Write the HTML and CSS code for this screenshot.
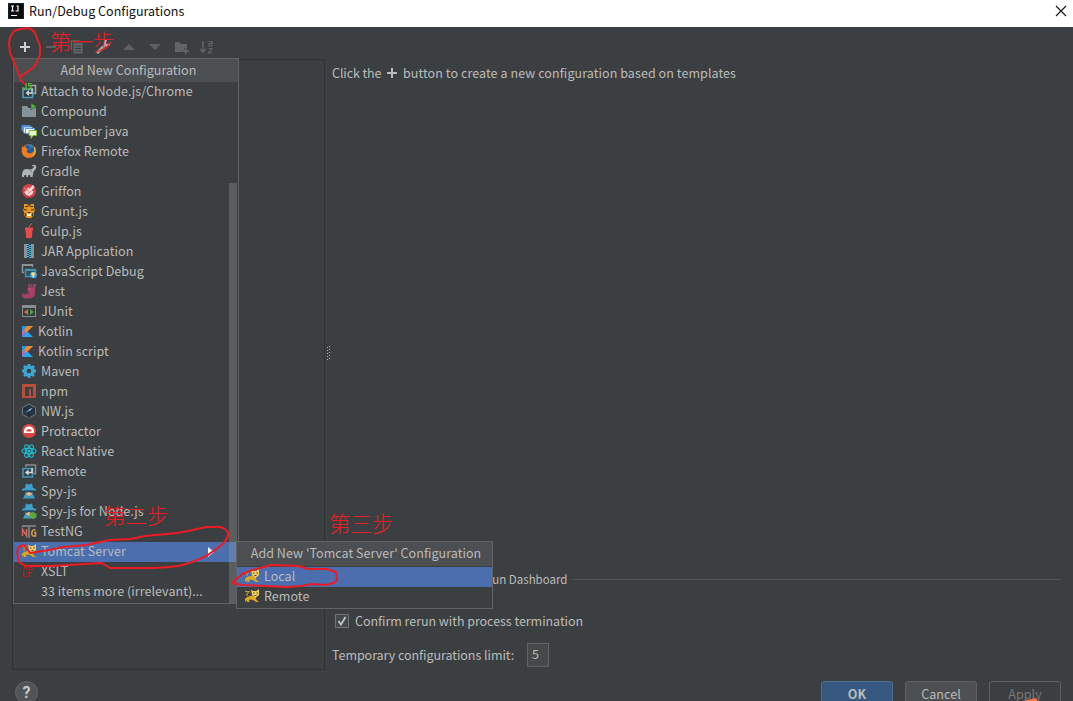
FILE: index.html
```html
<!DOCTYPE html>
<html lang="en">
<head>
<meta charset="utf-8">
<title>Run/Debug Configurations</title>
<link rel="stylesheet" href="styles.css">
</head>
<body>
<svg class="defs" width="0" height="0">
  <symbol id="attach" viewBox="0 0 16 16"><path d="M10 2.500h4.500v8H12" fill="none" stroke="#9aa7b0" stroke-width="1.600"/><path d="M2 6.500h9.500V14.500H2z" fill="#30393d" stroke="#4f9dbd" stroke-width="1.600"/><path d="M11 5v5H6" fill="none" stroke="#d0d4d6" stroke-width="1.400"/><path d="M8 7 4.500 10 8 13z" fill="#d0d4d6"/><path d="M5 0v5.500H2V4M10.500 .7H7.500v2h2.500v2.800H7" fill="none" stroke="#62b543" stroke-width="1.300"/></symbol>
  <symbol id="compound" viewBox="0 0 16 16"><path d="M1 3h5l1.500 2H15v9H1z" fill="#87939a"/><path d="M10 0v7l5.500-3.500z" fill="#4fb53b" stroke="#3c3f41" stroke-width=".5"/></symbol>
  <symbol id="cucumber" viewBox="0 0 16 16"><rect x=".5" y="2" width="9" height="6" rx="1" fill="#4a8fdc"/><rect x="2.500" y="4" width="9" height="6" rx="1" fill="#f5f8ff" stroke="#5d9be2"/><rect x="4.500" y="5.500" width="9" height="5" fill="#fff" stroke="#5d9be2"/><path d="M8 7.500h7.500v5H12l-2 3v-3H8z" fill="#eaf6cf" stroke="#79b83a"/></symbol>
  <symbol id="firefox" viewBox="0 0 16 16"><circle cx="8" cy="8" r="7" fill="#e86a1b"/><circle cx="8.500" cy="6.500" r="5.200" fill="#225a9d"/><path d="M6 1.500c3-1 6 0 7 3l-3 1z" fill="#3778b9"/><path d="M1.500 3 3 4.500l2-.5c0 1.500 1 2 2 2L5.500 8c1 3 5 3.500 7.500 0 1 5-3 7-6 6.500C1 14-.5 8 1.500 3z" fill="#ef7d1c"/><path d="M14 4c1.500 4 .5 8-3 10 2-3 3-5 2-9z" fill="#f6c62c"/></symbol>
  <symbol id="gradle" viewBox="0 0 16 16"><path d="M1 14c-.2-5 1-8 4.500-8 2 0 4 1 5.500 0l2-2c.5-.7-.5-1.300-1.300-.5l-.9-.6C12 1 15.300 1.300 15.300 4c0 3-3 3.500-3 6l-.8 4H9.500l-.5-2H7.500L7 14H5.500L5 12H3.500L3 14z" fill="#adb2b4"/><circle cx="10" cy="8" r=".6" fill="#3c3f41"/></symbol>
  <symbol id="griffon" viewBox="0 0 16 16"><circle cx="8" cy="8" r="7" fill="#d63d45"/><path d="M3 4.500 6 7l1-3.500L8 6l4-4 1.500 2-3 3.500 2 .5-1 3-3 2-3-1L3 9l2-1z" fill="#f6dedd"/><path d="m4 6 4 2M7 11l3-3" stroke="#d63d45" stroke-width=".7"/></symbol>
  <symbol id="grunt" viewBox="0 0 16 16"><path d="M3 1h2l3 1 3-1h2v4l1 2-1 2v3l-3 3H6l-3-3V9L2 7l1-2z" fill="#e99a1d"/><path d="M4 3.500h3M9 3.500h3M3 6.500l3 .5M13 6.500l-3 .5M4 10l1 3M12 10l-1 3M8 1.500v2" stroke="#4b2d17" stroke-width="1.200"/><path d="M6 10h4v3H6z" fill="#fff0bb"/><path d="M6 9h4l-2 2z" fill="#4b2d17"/></symbol>
  <symbol id="gulp" viewBox="0 0 16 16"><path d="M4 4.500h8v2l-.5 1-.7 7.500H5.200l-.7-7.500L4 6.500z" fill="#eb4a4b"/><path d="m8 5 1-3 2-1.500" fill="none" stroke="#eb4a4b"/></symbol>
  <symbol id="jar" viewBox="0 0 16 16"><path d="M3 1h10v14H3z" fill="#87939a"/><path d="M6 1h4v14H6z" fill="#25485a"/><path d="M7 1v14M9 2v13" stroke="#40b6e0" stroke-width="2" stroke-dasharray="1 1"/></symbol>
  <symbol id="jsdebug" viewBox="0 0 16 16"><path d="M3 9.500H1.500V2h10v2" fill="none" stroke="#87939a" stroke-width="1.500"/><path d="M1 1h11v2H1z" fill="#87939a"/><path d="M4.500 6.500h10v7h-10z" fill="#344e5a" stroke="#4593b3" stroke-width="1.500"/><path d="M4 6h11v2H4z" fill="#4593b3"/><circle cx="12.500" cy="12" r="3.300" fill="#4da5e5"/><path d="M10 10c3-2 5 0 4 2l-1 .5v2c-2 0-1-2-2.500-3z" fill="#f2df85"/></symbol>
  <symbol id="jest" viewBox="0 0 16 16"><path d="M7 1h8l-1 5v5c-1 4-5 4.500-9 4.500-4-.5-5-4-3-5s3 .5 4 .5l2-4z" fill="#a83f66"/><path d="m9 1 1 4M12 1l-1 4M3 10l1 2M7 10l2 2" stroke="#3c3f41" stroke-width=".8"/><circle cx="8" cy="6" r="1.500" fill="#bc4b75"/></symbol>
  <symbol id="junit" viewBox="0 0 16 16"><path d="M1 2h14v12H1z" fill="#8b8e90"/><path d="M2 5h12v8H2z" fill="#393d3f"/><path d="M7 6v6L3 9z" fill="#d66a52"/><path d="M9 6v6l4-3z" fill="#3ea34b"/></symbol>
  <symbol id="kotlin" viewBox="0 0 13 16"><path d="M1 3h11L1 14z" fill="#806cdd"/><path d="M6 3h6L1 14V9z" fill="#f28a22"/><path d="M1 3h5L1 8.500z" fill="#159fe5"/><path d="M1 9.500 4 6.500v4.500l-3 3z" fill="#9b72c5"/><path d="m1 14 5.500-5.500L12 14z" fill="#20a6f3"/></symbol>
  <symbol id="maven" viewBox="0 0 16 16"><circle cx="8" cy="8" r="4" fill="none" stroke="#3ca6d3" stroke-width="3.500"/><path d="M8 1v2.500M8 12.500V15M1 8h2.500M12.500 8H15M3 3l2 2M11 11l2 2M3 13l2-2M11 5l2-2" stroke="#3ca6d3" stroke-width="2.800"/></symbol>
  <symbol id="npm" viewBox="0 0 16 16"><path d="M1 1h14v14H1z" fill="#b84c3d"/><path d="M4 4h8v9h-2V6H8v7H4z" fill="#3c3f41"/></symbol>
  <symbol id="nw" viewBox="0 0 16 16"><path d="m8 1 6.500 3.500v7L8 15l-6.500-3.500v-7z" fill="#283442" stroke="#71808a" stroke-width=".9"/><path d="m2 5 6 3 6-3M8 8v7" fill="none" stroke="#1d2530"/><path d="m4 10 3-3 5-2.500-4 4z" fill="#3f80c6"/><path d="m8 7 4-2.500-3.500 3.500z" fill="#dce9ff"/></symbol>
  <symbol id="protractor" viewBox="0 0 16 16"><circle cx="8" cy="8" r="7" fill="#d74843"/><path d="M3 10V8a5 4.500 0 0 1 10 0v2z" fill="#fff"/><path d="M5.500 8.500a2.500 2.500 0 0 1 5 0z" fill="#d74843"/></symbol>
  <symbol id="react" viewBox="0 0 16 16"><g fill="none" stroke="#20bed3" stroke-width="1.100"><ellipse cx="8" cy="8" rx="7" ry="2.700"/><ellipse cx="8" cy="8" rx="7" ry="2.700" transform="rotate(60 8 8)"/><ellipse cx="8" cy="8" rx="7" ry="2.700" transform="rotate(120 8 8)"/></g><circle cx="8" cy="8" r="1.500" fill="#20bed3"/></symbol>
  <symbol id="remote" viewBox="0 0 16 16"><path d="M5 4V2h9.500v8.500H12" fill="none" stroke="#858d91" stroke-width="1.500"/><path d="M2 5.500h9.500V14H2z" fill="#32434c" stroke="#4593b3" stroke-width="1.600"/><path d="M11 5v4.500H6" fill="none" stroke="#d7dcdf" stroke-width="1.500"/><path d="M7.500 6.500 4 9.500l3.500 3z" fill="#d7dcdf"/></symbol>
  <symbol id="spy" viewBox="0 0 16 16"><path d="m5 .5 3 1 3-1 1 4.500 3 1v1.500H1V6l3-1z" fill="#3d9fca"/><path d="M4 8.500h8l-1 3-3 2-3-2z" fill="#ddb991"/><path d="M3.500 7.500h9v2.200H9.500L8 8.700 6.500 9.700h-3z" fill="#244f66"/><path d="m4 11 4 2.500 4-2.500 2 4.500H2z" fill="#3d9fca"/></symbol>
  <symbol id="spynode" viewBox="0 0 16 16"><use href="#spy"/><path d="m12 9 3.500 1.800v3.400L12 16l-3.500-1.800v-3.400z" fill="#60a53a"/></symbol>
  <symbol id="testng" viewBox="0 0 16 16"><path d="M1 2h14v2H9v11H7V4H1z" fill="#767879"/><path d="M1.500 13V6l4 7V6" fill="none" stroke="#d4665b" stroke-width="1.500"/><path d="M14.500 7c-4-2-5 6-2 6h2V9.500H13" fill="none" stroke="#d69a43" stroke-width="1.500"/></symbol>
  <symbol id="tomcat" viewBox="0 0 16 16"><path d="M1 3.500h4L3 6v2" fill="none" stroke="#c39a29" stroke-width="1.200"/><path d="m3 9 5-1.500 3.500 2 1 2.500 2.500 2h-3l-2-1.500-3-1L5 12l.5 2H3l-.5-2L1 14v-3z" fill="#dca91d"/><path d="M7 1.500 9 3h3.500l2.500-2v6l-3.500 3L8 7z" fill="#f1cf60"/><path d="M9 5h1.500M12.500 5H14M10.500 7.500h2" stroke="#51411d"/></symbol>
  <symbol id="plus" viewBox="0 0 12 12"><path d="M6 1v10M1 6h10" stroke="currentColor" stroke-width="2"/></symbol>
</svg>

<header class="titlebar">
  <svg class="logo" viewBox="0 0 16 16"><path d="M0 0h16v16H0z" fill="#15242d"/><path d="M1 1h14v14H1z" fill="#080b0d"/><path d="M3 3h3M4.500 3v5M3 8h3M7.500 8H10V3H8.500M3 12.500h6" fill="none" stroke="#fff" stroke-width="1.200"/></svg>
  <span class="title">Run/Debug Configurations</span>
  <svg class="close" viewBox="0 0 12 12"><path d="m1 1 10 10M11 1 1 11" stroke="#111" stroke-width="1.100"/></svg>
</header>

<main class="dialog">
  <section class="columns">
    <aside class="sidebar">
      <div class="toolbar">
        <svg class="tool add"><use href="#plus"/></svg>
        <svg class="tool" viewBox="0 0 16 16"><path d="M3 8h10" stroke="#5c6062" stroke-width="2"/></svg>
        <svg class="tool" viewBox="0 0 16 16"><path d="M2.500 11V2h8" fill="none" stroke="#626567" stroke-width="1.300"/><path d="M4.500 4h9v10.500h-9z" fill="#626567"/><path d="M6 7h6M6 9.500h6M6 12h6" stroke="#3c3f41"/></svg>
        <svg class="tool" viewBox="0 0 16 16"><path d="m2 14 8-8" stroke="#aaa" stroke-width="3"/><path d="M10 1 8 5l3 3 4-2V4l-3 1-1-1 1-3z" fill="#aaa"/></svg>
        <svg class="tool" viewBox="0 0 16 16"><path d="m2 11 6-6 6 6z" fill="#5c6062"/></svg>
        <svg class="tool" viewBox="0 0 16 16"><path d="m2 5 6 6 6-6z" fill="#5c6062"/></svg>
        <svg class="tool" viewBox="0 0 16 16"><path d="M2 3h4l2 2h6v4h-3v2H9v2H2z" fill="#626567"/><path d="M12.500 9v6M9.500 12h6" stroke="#626567" stroke-width="1.800"/></svg>
        <svg class="tool" viewBox="0 0 16 16"><path d="M4 2v11M1 10l3 3 3-3" fill="none" stroke="#626567" stroke-width="1.500"/><path d="M9.500 2.500h3.500V7H10V4.500h3M9.500 9.500h3.500l-3.500 4.500h4" fill="none" stroke="#626567" stroke-width="1.200"/></svg>
      </div>
      <div class="tree"></div>
    </aside>
    <div class="grip"><svg viewBox="0 0 4 15"><path d="M1.500 2v13M3.500 1v13" stroke="#aaa" stroke-dasharray="1 2"/></svg></div>
    <section class="content">
      <p class="hint"><span class="click">Click the</span><svg class="hintplus"><use href="#plus"/></svg><span class="hinttext">button to create a new configuration based on templates</span></p>
      <div class="separator"><span>Run Dashboard</span><i></i></div>
      <label class="confirm"><svg viewBox="0 0 14 14"><path d="M.5.5h13v13H.5z" fill="#43494a" stroke="#73777a"/><path d="m3.500 7 2.500 3.500L10.500 3" fill="none" stroke="#c2c2c2" stroke-width="1.800"/></svg><span>Confirm rerun with process termination</span></label>
      <div class="limit"><span>Temporary configurations limit:</span><b>5</b></div>
    </section>
  </section>
  <footer class="footer">
    <span class="help">?</span>
    <span class="button primary">OK</span>
    <span class="button">Cancel</span>
    <span class="button disabled">Apply</span>
  </footer>
</main>

<nav class="menu types">
  <h2>Add New Configuration</h2>
  <ul>
    <li><svg><use href="#attach"/></svg><span>Attach to Node.js/Chrome</span></li>
    <li><svg><use href="#compound"/></svg><span>Compound</span></li>
    <li><svg><use href="#cucumber"/></svg><span>Cucumber java</span></li>
    <li><svg><use href="#firefox"/></svg><span>Firefox Remote</span></li>
    <li><svg><use href="#gradle"/></svg><span>Gradle</span></li>
    <li><svg><use href="#griffon"/></svg><span>Griffon</span></li>
    <li><svg><use href="#grunt"/></svg><span>Grunt.js</span></li>
    <li><svg><use href="#gulp"/></svg><span>Gulp.js</span></li>
    <li><svg><use href="#jar"/></svg><span>JAR Application</span></li>
    <li><svg><use href="#jsdebug"/></svg><span>JavaScript Debug</span></li>
    <li><svg><use href="#jest"/></svg><span>Jest</span></li>
    <li><svg><use href="#junit"/></svg><span>JUnit</span></li>
    <li><svg class="narrow"><use href="#kotlin"/></svg><span>Kotlin</span></li>
    <li><svg class="narrow"><use href="#kotlin"/></svg><span>Kotlin script</span></li>
    <li><svg><use href="#maven"/></svg><span>Maven</span></li>
    <li><svg><use href="#npm"/></svg><span>npm</span></li>
    <li><svg><use href="#nw"/></svg><span>NW.js</span></li>
    <li><svg><use href="#protractor"/></svg><span>Protractor</span></li>
    <li><svg><use href="#react"/></svg><span>React Native</span></li>
    <li><svg><use href="#remote"/></svg><span>Remote</span></li>
    <li><svg><use href="#spy"/></svg><span>Spy-js</span></li>
    <li><svg><use href="#spynode"/></svg><span>Spy-js for Node.js</span></li>
    <li><svg><use href="#testng"/></svg><span>TestNG</span></li>
    <li class="selected"><svg><use href="#tomcat"/></svg><span>Tomcat Server</span><svg class="arrow" viewBox="0 0 7 10"><path d="M0 0v10l6-5z" fill="#fff"/></svg></li>
    <li><span class="xsl">XS<br>LT</span><span>XSLT</span></li>
    <li><svg></svg><span>33 items more (irrelevant)...</span></li>
  </ul>
  <div class="scrollbar"></div>
</nav>

<nav class="menu servers">
  <h2>Add New 'Tomcat Server' Configuration</h2>
  <ul>
    <li class="selected"><svg><use href="#tomcat"/></svg><span>Local</span></li>
    <li><svg><use href="#tomcat"/></svg><span>Remote</span></li>
  </ul>
</nav>

<span class="step one">第一步</span>
<span class="step two">第二步</span>
<span class="step three">第三步</span>
<svg class="marks" viewBox="0 0 1073 701">
  <g fill="none" stroke="#ed1c24" stroke-width="2" stroke-linejoin="round" stroke-linecap="round">
    <path d="M35 32 29 28l-9 1-6 2-4 6-1 7 1 9 4 9 6 15 7-5 7-5 3-5 3-8v-8l-3-8-2-5-4-4M20 76l1 5 4 3"/>
    <path d="M24 545c-6 1-8 5-6 12l1 5 7 4h24l35-2 17-1 8 5h45c15-1 22-1 31-4 10-3 19-6 26-12 7-5 15-10 16-17 1-5-6-9-13-8h-9l-18 4-11 2-32 3-15 3-20 1-24 5-23 2-14 3-19 3z"/>
    <path d="m232 583 10-9 10-4 12-3 7-2 27 1 10 3h18l10 3 1 8-3 3-9 2-13-1-11 2-14 1-22-1-23-1z"/>
  </g>
  <path d="m1022 701 14-3 2 3z" fill="#ff7043"/>
</svg>
</body>
</html>
```
FILE: styles.css
```css
* { box-sizing: border-box; }
body { margin: 0; width: 1073px; height: 701px; overflow: hidden; position: relative; display: flex; flex-direction: column; background: #3c3f41; color: #bbb; font: 12.5px/20px "Noto Sans CJK SC", "Noto Sans", sans-serif; letter-spacing: .05px; white-space: nowrap; }
.defs { position: absolute; }
svg { flex: none; display: block; }
.titlebar { height: 27px; flex: none; display: flex; align-items: center; padding: 0 6px 5px 8px; background: #fff; color: #111; }
.logo { width: 16px; height: 16px; margin-right: 5px; }
.title { flex: 1; letter-spacing: .03px; }
.close { width: 12px; height: 12px; }
.dialog { flex: 1; display: flex; flex-direction: column; }
.columns { height: 643px; display: flex; }
.sidebar { width: 325px; padding: 7px 0 0 12px; display: flex; flex-direction: column; }
.toolbar { height: 25px; display: flex; align-items: center; gap: 10px; padding-left: 5px; }
.tool { width: 16px; height: 16px; }
.add { padding: 2px; color: #d0d0d0; }
.tree { flex: 1; border: 1px solid #2f3133; }
.grip { width: 7px; padding: 318px 0 0 1px; }
.grip svg { width: 4px; height: 15px; }
.content { flex: 1; display: flex; flex-direction: column; padding-top: 36px; }
.hint { height: 20px; margin: 0; display: flex; align-items: center; }
.click { width: 54px; letter-spacing: -.1px; }
.hintplus { width: 12px; height: 12px; margin-right: 5px; }
.hinttext { letter-spacing: .08px; }
.separator { display: flex; align-items: center; margin: 486px 12px 0 153px; height: 20px; font-size: 11.5px; letter-spacing: 0; }
.separator i { flex: 1; height: 1px; margin-left: 6px; background: #515557; }
.confirm { display: flex; align-items: center; height: 20px; margin-top: 22px; padding-left: 3px; letter-spacing: -.04px; }
.confirm svg { width: 14px; height: 14px; margin-right: 6px; }
.limit { display: flex; align-items: center; margin-top: 12px; letter-spacing: -.05px; }
.limit span { width: 183px; }
.limit b { font-weight: 400; width: 22px; height: 24px; margin-left: 12px; padding-left: 4px; border: 1px solid #646464; background: #45494a; }
.footer { height: 31px; padding: 11px 12px 0 15px; display: flex; align-items: flex-start; gap: 12px; overflow: hidden; }
.help { width: 23px; height: 23px; border-radius: 50%; border: 1px solid #646769; background: #505456; color: #c8c8c8; font: bold 16px/22px Roboto, sans-serif; text-align: center; letter-spacing: 0; margin-right: auto; }
.button { width: 72px; height: 26px; border: 1px solid #5e6162; border-radius: 3px; background: #4c5052; line-height: 23px; text-align: center; }
.primary { background: #365880; border-color: #4c708c; font-weight: 700; }
.disabled { background: #3c3f41; color: #777; }
.menu { position: absolute; border: 1px solid #616365; background: #3c3f41; }
.menu h2 { margin: 0; background: #4b4f52; font-size: 12.5px; font-weight: 400; text-align: center; }
.menu ul { list-style: none; margin: 0; padding: 0; }
.menu li { height: 20px; display: flex; align-items: center; padding: 0 0 2px 7px; line-height: 18px; }
.menu li svg { width: 16px; height: 16px; margin-right: 4px; }
.menu li .narrow { width: 13px; }
.menu .selected { background: #4b6eaf; }
.menu li .arrow { width: 7px; height: 10px; margin: 1px 23px 0 auto; }
.xsl { width: 18px; margin: 0 1px 0 1px; font: bold 8px/7px "Liberation Sans", sans-serif; color: #c01618; letter-spacing: 0; }
.types { left: 13px; top: 58px; width: 226px; height: 546px; }
.types h2 { height: 23px; line-height: 22px; padding-left: 5px; }
.scrollbar { position: absolute; right: 1px; top: 124px; width: 8px; height: 420px; background: rgba(166, 166, 166, .3); }
.servers { left: 236px; top: 541px; width: 257px; height: 68px; }
.servers h2 { height: 24px; line-height: 22px; margin-bottom: 1px; padding-left: 3px; }
.step { position: absolute; color: #ed1c24; font: 300 21.5px/24px "Noto Sans CJK SC", sans-serif; letter-spacing: 0; }
.one { left: 50px; top: 29px; }
.two { left: 104px; top: 503px; }
.three { left: 329px; top: 511px; }
.marks { position: absolute; left: 0; top: 0; width: 1073px; height: 701px; }
```
